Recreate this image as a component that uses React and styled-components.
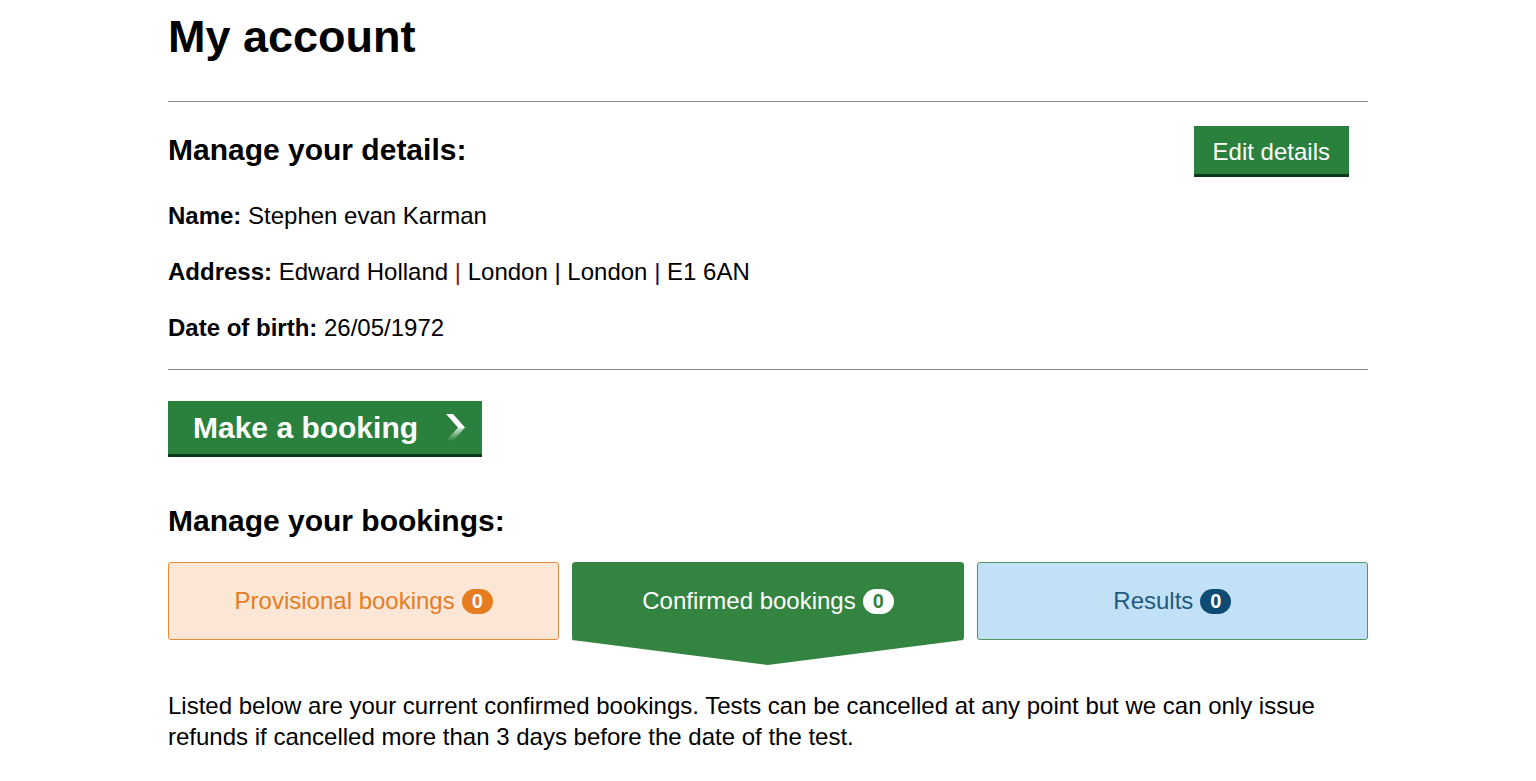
import React from "react";
import styled, { createGlobalStyle } from "styled-components";

const GlobalStyle = createGlobalStyle`
  html, body {
    margin: 0;
    padding: 0;
    background: #ffffff;
  }
  body {
    font-family: "Liberation Sans", Arial, sans-serif;
    color: #0b0c0c;
  }
`;

const Page = styled.main`
  max-width: 1200px;
  margin: 0 auto;
  padding-top: 12px;
`;

const Title = styled.h1`
  margin: 0;
  font-size: 45px;
  line-height: 50px;
  font-weight: 700;
  color: #000;
`;

const Rule = styled.hr`
  border: 0;
  border-top: 1px solid #8a8a8a;
  margin: ${p => p.$top}px 0 ${p => p.$bottom}px;
`;

const DetailsHead = styled.div`
  display: flex;
  align-items: center;
  justify-content: space-between;
  padding-right: 19px;
  margin-bottom: 27px;
`;

const Heading = styled.h2`
  margin: 0;
  font-size: 30px;
  line-height: 36px;
  font-weight: 700;
  color: #000;
`;

const Button = styled.button`
  font-family: "Liberation Sans", Arial, sans-serif;
  display: inline-flex;
  align-items: center;
  gap: 28px;
  box-sizing: border-box;
  border: 0;
  border-radius: 0;
  background: #2a803d;
  color: #ffffff;
  box-shadow: 0 3px 0 #0b3b1a;
  cursor: pointer;
  font-size: ${p => (p.$big ? "30px" : "24px")};
  font-weight: ${p => (p.$big ? 700 : 400)};
  height: ${p => (p.$big ? "53px" : "48px")};
  padding: ${p => (p.$big ? "0 17px 0 25px" : "4px 19px 0")};
  line-height: 1;
`;

const Field = styled.p`
  margin: 0 0 26px;
  font-size: 24px;
  line-height: 30px;
  color: #000;
  &:last-of-type {
    margin-bottom: 0;
  }
`;

const Label = styled.b`
  font-weight: 700;
`;

const Sep = styled.span`
  color: ${p => p.$tone || "#000"};
`;

const BookingsHead = styled(Heading)`
  margin: 49px 0 23px;
`;

const Tabs = styled.div`
  display: grid;
  grid-template-columns: repeat(3, 1fr);
  gap: 13px;
  height: 78px;
`;

const tabTones = {
  provisional: { bg: "#fce7d7", border: "#e98a3a", color: "#e57c23" },
  confirmed: { bg: "#338341", border: "#338341", color: "#ffffff" },
  results: { bg: "#c2e1f6", border: "#4f9463", color: "#1d5980" },
};

const Tab = styled.div`
  position: relative;
  display: flex;
  align-items: center;
  justify-content: center;
  gap: 7px;
  box-sizing: border-box;
  height: 78px;
  border: 1px solid ${p => tabTones[p.$kind].border};
  border-radius: 3px;
  background: ${p => tabTones[p.$kind].bg};
  color: ${p => tabTones[p.$kind].color};
  font-size: 24px;
  cursor: pointer;
`;

const TabArrow = styled.svg`
  position: absolute;
  left: -1px;
  top: 76px;
  width: calc(100% + 2px);
  height: 27px;
`;

const badgeTones = {
  provisional: { bg: "#e57c1f", color: "#ffffff" },
  confirmed: { bg: "#ffffff", color: "#338341" },
  results: { bg: "#0e4b74", color: "#ffffff" },
};

const Badge = styled.span`
  display: inline-flex;
  align-items: center;
  justify-content: center;
  min-width: 31px;
  height: 25px;
  border-radius: 13px;
  background: ${p => badgeTones[p.$kind].bg};
  color: ${p => badgeTones[p.$kind].color};
  font-size: 20px;
  font-weight: 700;
`;

const Intro = styled.p`
  margin: 50px 0 0;
  font-size: 24px;
  line-height: 31px;
  color: #000;
`;

const Chevron = () => (
  <svg width="19" height="27" viewBox="0 0 19 27">
    <defs>
      <linearGradient id="chev" x1="0" y1="0" x2="0" y2="1">
        <stop offset="0" stopColor="#ffffff" />
        <stop offset="0.5" stopColor="#ffffff" />
        <stop offset="0.52" stopColor="#cfe3d3" />
        <stop offset="1" stopColor="#2a803d" />
      </linearGradient>
    </defs>
    <polygon points="0,0 7,0 19,13.5 7,27 0,27 12,13.5" fill="url(#chev)" />
  </svg>
);

const tabs = [
  { kind: "provisional", label: "Provisional bookings", count: 0 },
  { kind: "confirmed", label: "Confirmed bookings", count: 0, active: true },
  { kind: "results", label: "Results", count: 0 },
];

export default function App() {
  return (
    <>
      <GlobalStyle />
      <Page>
        <Title>My account</Title>
        <Rule $top={39} $bottom={24} />

        <DetailsHead>
          <Heading>Manage your details:</Heading>
          <Button>Edit details</Button>
        </DetailsHead>

        <Field>
          <Label>Name:</Label> Stephen evan Karman
        </Field>
        <Field>
          <Label>Address:</Label> Edward Holland <Sep $tone="#8a1010">|</Sep> London{" "}
          <Sep>|</Sep> London <Sep $tone="#10105a">|</Sep> E1 6AN
        </Field>
        <Field>
          <Label>Date of birth:</Label> 26/05/1972
        </Field>

        <Rule $top={24} $bottom={31} />

        <Button $big>
          Make a booking
          <Chevron />
        </Button>

        <BookingsHead>Manage your bookings:</BookingsHead>

        <Tabs>
          {tabs.map(t => (
            <Tab key={t.kind} $kind={t.kind}>
              {t.label}
              <Badge $kind={t.kind}>{t.count}</Badge>
              {t.active && (
                <TabArrow viewBox="0 0 100 27" preserveAspectRatio="none">
                  <polygon points="0,0 100,0 100,1 50,26 0,1" fill="#338341" />
                </TabArrow>
              )}
            </Tab>
          ))}
        </Tabs>

        <Intro>
          Listed below are your current confirmed bookings. Tests can be cancelled at any point but
          we can only issue refunds if cancelled more than 3 days before the date of the test.
        </Intro>
      </Page>
    </>
  );
}
